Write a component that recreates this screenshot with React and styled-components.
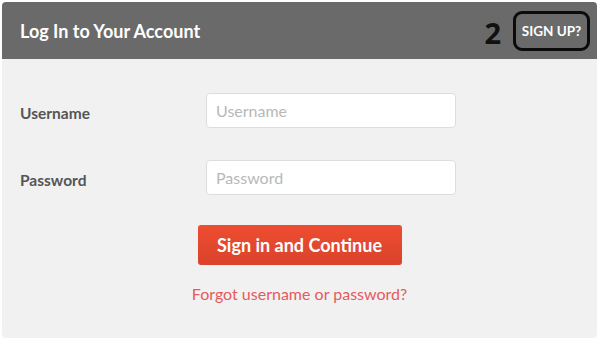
import React from "react";
import styled, { createGlobalStyle } from "styled-components";

const GlobalStyle = createGlobalStyle`
  body {
    margin: 0;
    background: #ffffff;
    font-family: Lato, "Open Sans", sans-serif;
  }
`;

const Card = styled.section`
  margin: 2px;
  width: 595px;
  height: 336px;
  background: #f1f1f1;
  border-radius: 4px;
  overflow: hidden;
  display: flex;
  flex-direction: column;
`;

const Header = styled.header`
  height: 57px;
  background: #6a6a6b;
  display: flex;
  align-items: center;
  justify-content: space-between;
  padding: 0 7px 0 18px;
`;

const Title = styled.h1`
  margin: 0;
  font-size: 18px;
  font-weight: 700;
  color: #ffffff;
`;

const HeaderRight = styled.div`
  display: flex;
  align-items: center;
  gap: 12px;
`;

const Marker = styled.span`
  font-family: "Open Sans", sans-serif;
  font-weight: 700;
  font-size: 29px;
  color: #111;
  line-height: 1;
  margin-top: 4px;
`;

const SignUp = styled.a`
  display: flex;
  align-items: center;
  justify-content: center;
  width: 71px;
  height: 34px;
  border: 3px solid #0b0b0b;
  border-radius: 9px;
  color: #ffffff;
  font-size: 13.5px;
  font-weight: 700;
  text-decoration: none;
  margin-top: 1px;
  white-space: nowrap;
`;

const Body = styled.div`
  padding: 34px 18px 0;
  display: flex;
  flex-direction: column;
`;

const FieldRow = styled.div`
  display: grid;
  grid-template-columns: 186px 250px;
  align-items: center;
  margin-bottom: ${(p) => p.$gap}px;
`;

const Label = styled.label`
  font-size: 15.5px;
  font-weight: 700;
  color: #555555;
  padding-top: 4px;
`;

const Input = styled.input`
  box-sizing: border-box;
  height: 35px;
  width: 250px;
  border: 1px solid #dddddd;
  border-radius: 4px;
  background: #ffffff;
  padding: 0 9px;
  font-family: Lato, sans-serif;
  font-size: 16px;
  color: #444;
  outline: none;

  &::placeholder {
    color: #b8b8b8;
  }
`;

const Actions = styled.div`
  display: flex;
  flex-direction: column;
  align-items: center;
  margin-top: 30px;
  margin-left: -18px;
  margin-right: -18px;
`;

const SubmitButton = styled.button`
  width: 204px;
  height: 40px;
  border: none;
  border-radius: 3px;
  background: linear-gradient(#ee4d31, #d9432a);
  color: #ffffff;
  font-family: Lato, sans-serif;
  font-size: 18px;
  font-weight: 700;
  cursor: pointer;
`;

const ForgotLink = styled.a`
  margin-top: 19px;
  font-size: 16px;
  color: #e65a5c;
  text-decoration: none;
`;

const fields = [
  { id: "username", label: "Username", type: "text", gap: 32 },
  { id: "password", label: "Password", type: "password", gap: 0 },
];

export default function App() {
  return (
    <>
      <GlobalStyle />
      <Card>
        <Header>
          <Title>Log In to Your Account</Title>
          <HeaderRight>
            <Marker>2</Marker>
            <SignUp href="#">SIGN UP?</SignUp>
          </HeaderRight>
        </Header>
        <Body>
          {fields.map((f) => (
            <FieldRow key={f.id} $gap={f.gap}>
              <Label htmlFor={f.id}>{f.label}</Label>
              <Input id={f.id} type={f.type} placeholder={f.label} />
            </FieldRow>
          ))}
          <Actions>
            <SubmitButton>Sign in and Continue</SubmitButton>
            <ForgotLink href="#">Forgot username or password?</ForgotLink>
          </Actions>
        </Body>
      </Card>
    </>
  );
}
